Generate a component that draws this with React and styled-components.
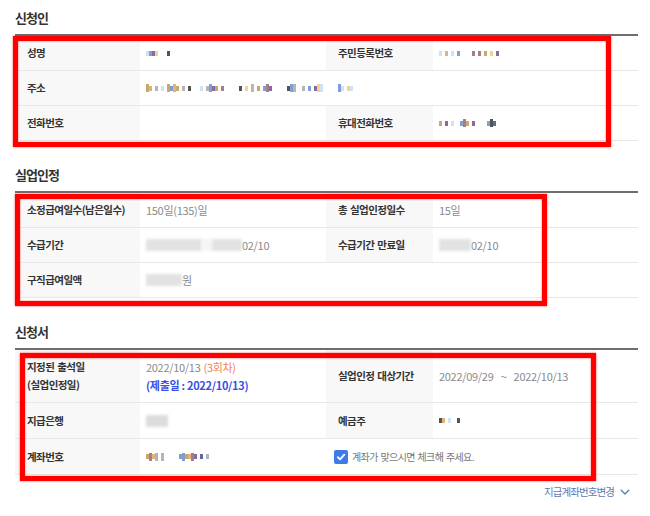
import React from "react";
import styled, { createGlobalStyle } from "styled-components";

const Global = createGlobalStyle`
  html, body { margin: 0; padding: 0; background: #fff; }
  body { font-family: "Noto Sans CJK KR", "Noto Sans", sans-serif; }
`;

const Page = styled.div`
  width: 650px;
  box-sizing: border-box;
  padding: 0 12px 0 15px;
`;

const Section = styled.section`
  & + & { margin-top: ${(p) => p.$gap || 17}px; }
`;

const Title = styled.h2`
  margin: 0;
  height: 34px;
  display: flex;
  align-items: center;
  font-size: 13px;
  font-weight: 700;
  letter-spacing: -1px;
  color: #333;
`;

const Table = styled.div`
  position: relative;
  border-top: 2px solid #6e6e6e;
`;

const Row = styled.div`
  display: grid;
  grid-template-columns: 125px 186px 107px 1fr;
  min-height: ${(p) => p.$h || 34}px;
  border-bottom: 1px solid #e8e8e8;
`;

const Label = styled.div`
  background: #f8f8f8;
  padding: 0 12px;
  display: flex;
  flex-direction: column;
  justify-content: center;
  font-size: 10.5px;
  font-weight: 700;
  letter-spacing: -0.55px;
  word-spacing: 1px;
  line-height: 18px;
  color: #333;
  white-space: pre;
`;

const Value = styled.div`
  grid-column: span ${(p) => p.$span || 1};
  padding: 0 6px;
  display: flex;
  flex-direction: ${(p) => (p.$stack ? "column" : "row")};
  justify-content: ${(p) => (p.$stack ? "center" : "flex-start")};
  align-items: ${(p) => (p.$stack ? "flex-start" : "center")};
  font-size: 11px;
  letter-spacing: -0.3px;
  line-height: 18px;
  color: #8a8a8a;
  white-space: nowrap;
`;

const CheckCell = styled.div`
  grid-column: span 2;
  padding: 0 8px;
  display: flex;
  align-items: center;
  gap: 4px;
  font-size: 10px;
  letter-spacing: -0.6px;
  word-spacing: 1px;
  color: #777;
`;

const Box = styled.span`
  width: 14px;
  height: 14px;
  border-radius: 2px;
  background: #3f7ae6;
  display: inline-flex;
  align-items: center;
  justify-content: center;
`;

const Orange = styled.span`
  color: #f0845a;
  margin-left: 3px;
`;

const Blue = styled.span`
  color: #3b4fe6;
  font-weight: 700;
`;

const Wide = styled.span`
  word-spacing: 5px;
`;

const Blur = styled.span`
  display: inline-block;
  width: ${(p) => p.$w}px;
  height: 12px;
  background: ${(p) => p.$c || "#e2e2e2"};
  filter: blur(1.5px);
`;

const MosaicRow = styled.span`
  display: inline-flex;
  align-items: center;
  filter: blur(0.4px);
`;

const Cell = styled.span`
  display: inline-block;
  width: 3px;
  height: ${(p) => p.$h}px;
  background: ${(p) => p.$c};
`;

const Highlight = styled.div`
  position: absolute;
  box-sizing: border-box;
  border: 5px solid #ff0000;
  box-shadow: 0 0 2px rgba(255, 0, 0, 0.7), inset 0 0 2px rgba(255, 0, 0, 0.7);
  pointer-events: none;
`;

const Footer = styled.div`
  display: flex;
  justify-content: flex-end;
  align-items: center;
  gap: 6px;
  margin-top: 9px;
  padding-right: 8px;
  font-size: 10.5px;
  letter-spacing: -0.9px;
  line-height: 16px;
  color: #6079b3;
`;

const COLORS = {
  a: "#c9a86a",
  b: "#7f9ed4",
  p: "#8a6a9a",
  y: "#f1d48e",
  g: "#b5b5b5",
  k: "#555",
  l: "#cfe2f4",
  o: "#e2b27e",
  m: "#a27e8e",
  d: "#5a6a9a",
};

function Mosaic({ pattern }) {
  return (
    <MosaicRow>
      {pattern.split("").map((ch, i) =>
        ch === "." ? (
          <Cell key={i} $h={5} $c="transparent" />
        ) : (
          <Cell key={i} $h={ch === ch.toUpperCase() ? 8 : 5} $c={COLORS[ch.toLowerCase()]} />
        )
      )}
    </MosaicRow>
  );
}

function Check() {
  return (
    <Box>
      <svg width="10" height="10" viewBox="0 0 10 10">
        <polyline points="1.8,5.2 4,7.4 8.3,2.6" fill="none" stroke="#fff" strokeWidth="1.8" strokeLinecap="round" strokeLinejoin="round" />
      </svg>
    </Box>
  );
}

export default function App() {
  return (
    <Page>
      <Global />
      <Section>
        <Title>신청인</Title>
        <Table>
          <Row>
            <Label>성명</Label>
            <Value><Mosaic pattern="lbpy...k" /></Value>
            <Label>주민등록번호</Label>
            <Value><Mosaic pattern="l.o.l.b....m.m.a.y.p" /></Value>
          </Row>
          <Row>
            <Label>주소</Label>
            <Value $span={3}>
              <Mosaic pattern="Ao.g.l.AbOa.g.k...l.gBpa.m.....k.y.G.a.bMp.....kBG..g.b.pYL.....Bl.yl" />
            </Value>
          </Row>
          <Row>
            <Label>전화번호</Label>
            <Value />
            <Label>휴대전화번호</Label>
            <Value><Mosaic pattern="a.p.l..bMa.p....bKd" /></Value>
          </Row>
          <Highlight style={{ left: -2, top: 0, width: 598, height: 111 }} />
        </Table>
      </Section>

      <Section>
        <Title>실업인정</Title>
        <Table>
          <Row>
            <Label>소정급여일수(남은일수)</Label>
            <Value>150일(135)일</Value>
            <Label>총 실업인정일수</Label>
            <Value>15일</Value>
          </Row>
          <Row>
            <Label>수급기간</Label>
            <Value>
              <Blur $w={56} />
              <Blur $w={10} $c="#f4f4f4" />
              <Blur $w={30} />
              02/10
            </Value>
            <Label>수급기간 만료일</Label>
            <Value>
              <Blur $w={32} />
              02/10
            </Value>
          </Row>
          <Row>
            <Label>구직급여일액</Label>
            <Value $span={3}>
              <Blur $w={36} />
              원
            </Value>
          </Row>
          <Highlight style={{ left: 0, top: 1, width: 532, height: 112 }} />
        </Table>
      </Section>

      <Section $gap={16}>
        <Title>신청서</Title>
        <Table>
          <Row $h={52}>
            <Label>
              <span>지정된 출석일</span>
              <span>(실업인정일)</span>
            </Label>
            <Value $stack>
              <span>
                2022/10/13<Orange>(3회차)</Orange>
              </span>
              <Blue>(제출일 : 2022/10/13)</Blue>
            </Value>
            <Label>실업인정 대상기간</Label>
            <Value>
              <Wide>2022/09/29 ~ 2022/10/13</Wide>
            </Value>
          </Row>
          <Row $h={35}>
            <Label>지급은행</Label>
            <Value><Blur $w={22} $c="#dcdcdc" /></Value>
            <Label>예금주</Label>
            <Value><Mosaic pattern="ko.l..k" /></Value>
          </Row>
          <Row $h={35}>
            <Label>계좌번호</Label>
            <Value><Mosaic pattern="aMoG.G.....bBaoMp.d.g" /></Value>
            <CheckCell>
              <Check />
              계좌가 맞으시면 체크해 주세요.
            </CheckCell>
          </Row>
          <Highlight style={{ left: 5, top: 3, width: 576, height: 128 }} />
        </Table>
        <Footer>
          지급계좌번호변경
          <svg width="10" height="6" viewBox="0 0 10 6">
            <polyline points="0.8,0.8 5,5 9.2,0.8" fill="none" stroke="#6079b3" strokeWidth="1.3" />
          </svg>
        </Footer>
      </Section>
    </Page>
  );
}
